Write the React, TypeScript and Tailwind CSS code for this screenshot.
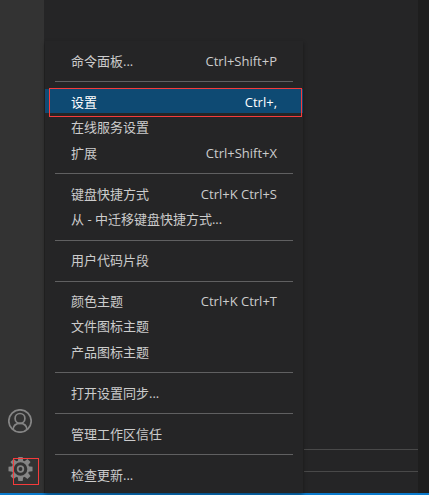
import { Fragment } from 'react';

interface MenuItem {
  label: string;
  keys?: string;
  active?: boolean;
}

const groups: MenuItem[][] = [
  [{ label: '命令面板...', keys: 'Ctrl+Shift+P' }],
  [
    { label: '设置', keys: 'Ctrl+,', active: true },
    { label: '在线服务设置' },
    { label: '扩展', keys: 'Ctrl+Shift+X' },
  ],
  [
    { label: '键盘快捷方式', keys: 'Ctrl+K Ctrl+S' },
    { label: '从 - 中迁移键盘快捷方式...' },
  ],
  [{ label: '用户代码片段' }],
  [
    { label: '颜色主题', keys: 'Ctrl+K Ctrl+T' },
    { label: '文件图标主题' },
    { label: '产品图标主题' },
  ],
  [{ label: '打开设置同步...' }],
  [{ label: '管理工作区信任' }],
  [{ label: '检查更新...' }],
];

const teeth = [0, 45, 90, 135, 180, 225, 270, 315];

function AccountIcon() {
  return (
    <svg className="w-6 h-6" viewBox="0 0 24 24" fill="none" stroke="#858585" strokeWidth="1.7">
      <circle cx="12" cy="12" r="11.2" />
      <circle cx="12" cy="9.4" r="4.9" />
      <path d="M5 20.6c.3-3.8 3-6.3 7-6.3s6.7 2.5 7 6.3" />
    </svg>
  );
}

function GearIcon() {
  return (
    <svg className="w-[25px] h-6" viewBox="0 0 24 24" fill="none" stroke="#858585">
      <circle cx="12" cy="12" r="7.8" strokeWidth="2" />
      {teeth.map((angle) => (
        <path
          key={angle}
          d="M9.3 4.4 9.8 0h4.4l.5 4.4z"
          fill="#858585"
          stroke="none"
          transform={`rotate(${angle} 12 12)`}
        />
      ))}
      <circle cx="12" cy="12" r="2.8" strokeWidth="1.8" />
    </svg>
  );
}

function MenuRow({ item }: { item: MenuItem }) {
  return (
    <li className="h-[25.4px]">
      <div
        className={`flex h-6 items-center justify-between px-[26px] ${
          item.active ? 'bg-[#0e4a73] text-white' : 'text-[#cccccc]'
        }`}
      >
        <span className="pt-px">{item.label}</span>
        {item.keys && <span className="pt-px">{item.keys}</span>}
      </div>
    </li>
  );
}

export default function App() {
  return (
    <div className="relative flex h-[495px] w-[429px] flex-col overflow-hidden bg-[#252526] text-[13px] leading-6 font-['Open_Sans','Noto_Sans_CJK_SC',sans-serif]">
      <div className="flex min-h-0 flex-1">
        {/* Activity bar */}
        <aside className="flex w-11 shrink-0 flex-col items-center justify-end gap-6 bg-[#333333] pr-1 pb-3">
          <AccountIcon />
          <GearIcon />
        </aside>

        {/* Side panel behind the menu */}
        <main className="flex flex-1 flex-col justify-end bg-[#252526]">
          <div className="ml-[260px] h-[22px] border-t border-[#494949]" />
          <div className="ml-[260px] h-[22px] border-t border-[#494949]" />
        </main>
        <div className="w-[11px] bg-[#1e1e1e]" />
      </div>
      <footer className="h-0.5 bg-[#0a7acc]" />

      {/* Manage menu */}
      <ul className="absolute left-[45px] top-[41px] h-[452px] w-[258px] bg-[#252526] pt-[7.45px] shadow-[0_2px_4px_rgba(0,0,0,0.4)]">
        {groups.map((group, i) => (
          <Fragment key={i}>
            {i > 0 && (
              <li className="h-[15.6px] pt-[7.6px]">
                <div className="mx-2.5 h-px bg-[#606061]" />
              </li>
            )}
            {group.map((item) => (
              <MenuRow key={item.label} item={item} />
            ))}
          </Fragment>
        ))}
      </ul>

      {/* Highlight frames */}
      <div className="absolute left-[49px] top-[88px] h-[29px] w-[253px] border border-[#f53b3b]" />
      <div className="absolute left-[13px] top-[458px] h-[27px] w-[26px] border border-[#f53b3b]" />
    </div>
  );
}
